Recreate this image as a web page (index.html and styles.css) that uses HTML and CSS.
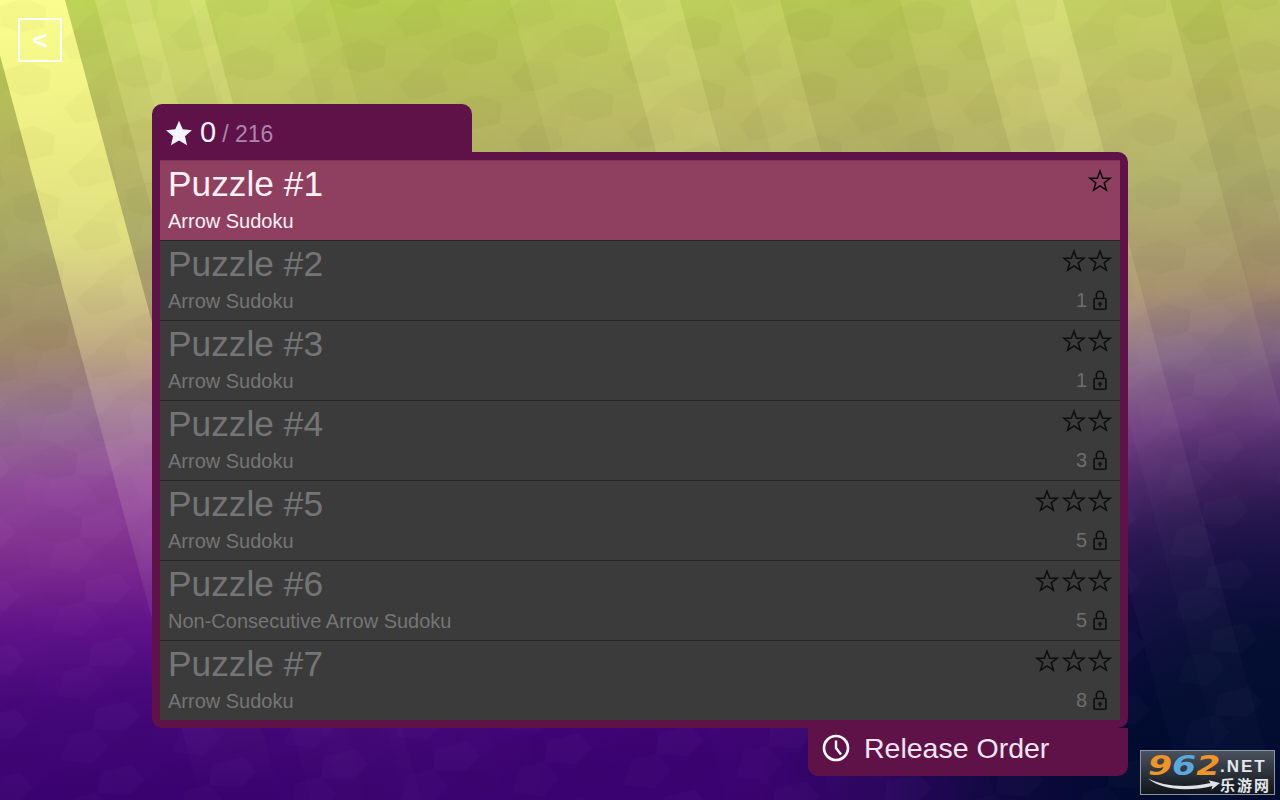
FILE: index.html
```html
<!DOCTYPE html>
<html lang="en">
<head>
    <meta charset="UTF-8">
    <title>Puzzle list</title>
    <link rel="stylesheet" href="styles.css">
</head>
<body>
<svg width="0" height="0" class="defs">
    <defs>
        <symbol id="star" viewBox="0 0 24 24"><path d="M12 2l2.6 7.2h7.7l-6.1 4.6 2.2 7.4L12 16.8l-6.4 4.4 2.2-7.4-6.1-4.6h7.7z" fill="none" stroke="currentColor" stroke-width="1.5"/></symbol>
        <symbol id="lock" viewBox="0 0 14 20"><path d="M3.4 8.5V4.8a3.6 3.6 0 0 1 7.2 0v3.7" fill="none" stroke="currentColor" stroke-width="1.5"/><rect x="1" y="8.5" width="12" height="10.7" rx="1.2" fill="none" stroke="currentColor" stroke-width="1.6"/><path d="M7 17v-4M5.2 14.6L7 12.6l1.8 2" fill="none" stroke="currentColor" stroke-width="1.4"/></symbol>
        <linearGradient id="fade" gradientUnits="userSpaceOnUse" x1="0" y1="0" x2="0" y2="800">
            <stop offset="0" stop-color="#ffffa0" stop-opacity="1"/>
            <stop offset=".3" stop-color="#ffffa0" stop-opacity=".5"/>
            <stop offset=".56" stop-color="#ffe0f0" stop-opacity=".18"/>
            <stop offset="1" stop-color="#ffe0ff" stop-opacity=".03"/>
        </linearGradient>
        <linearGradient id="fade-bright" gradientUnits="userSpaceOnUse" x1="0" y1="0" x2="0" y2="800">
            <stop offset="0" stop-color="#ffff90" stop-opacity=".95"/>
            <stop offset=".3" stop-color="#ffff90" stop-opacity=".62"/>
            <stop offset=".5" stop-color="#ffe0c0" stop-opacity=".2"/>
            <stop offset=".75" stop-color="#ffe0ff" stop-opacity=".07"/>
            <stop offset="1" stop-color="#ffe0ff" stop-opacity="0"/>
        </linearGradient>
        <pattern id="cells" patternUnits="userSpaceOnUse" width="112" height="64" patternTransform="rotate(-4)">
            <polygon points="0,6 24,0 46,10 42,30 18,34 0,26" fill="#000" fill-opacity=".05"/>
            <polygon points="46,10 78,4 90,20 74,34 42,30" fill="#fff" fill-opacity=".04"/>
            <polygon points="90,20 112,6 112,26 100,38 74,34" fill="#000" fill-opacity=".03"/>
            <polygon points="18,34 42,30 56,48 38,64 8,58" fill="#fff" fill-opacity=".03"/>
            <polygon points="56,48 74,34 100,38 104,58 78,64 66,64" fill="#000" fill-opacity=".05"/>
        </pattern>
    </defs>
</svg>
<div class="stage">
    <svg class="rays" viewBox="0 0 1280 800">
        <polygon class="a5" points="-15,0 65,0 281,800 201,800"/>
        <polygon class="a1" points="65,0 95,0 311,800 281,800"/>
        <polygon class="a3" points="95,0 125,0 341,800 311,800"/>
        <polygon class="a4" points="125,0 150,0 366,800 341,800"/>
        <polygon class="a3" points="150,0 190,0 406,800 366,800"/>
        <polygon class="a4" points="190,0 205,0 421,800 406,800"/>
        <polygon class="a2" points="205,0 290,0 506,800 421,800"/>
        <polygon class="a1" points="290,0 330,0 546,800 506,800"/>
        <polygon class="a1" points="510,0 560,0 776,800 726,800"/>
        <polygon class="a1" points="560,0 615,0 831,800 776,800"/>
        <polygon class="a3" points="615,0 680,0 896,800 831,800"/>
        <polygon class="a1" points="680,0 730,0 946,800 896,800"/>
        <polygon class="a2" points="730,0 780,0 996,800 946,800"/>
        <polygon class="a1" points="900,0 970,0 1186,800 1116,800"/>
        <polygon class="a3" points="970,0 1015,0 1231,800 1186,800"/>
        <polygon class="a4" points="1015,0 1063,0 1279,800 1231,800"/>
        <polygon class="a2" points="1063,0 1170,0 1386,800 1279,800"/>
        <polygon class="a1" points="1220,0 1280,0 1496,800 1436,800"/>
        <rect class="mesh" x="0" y="0" width="1280" height="800"/>
    </svg>

    <a class="back">&lt;</a>

    <div class="board">
        <div class="score">
            <svg class="score-star" viewBox="0 0 24 24"><path d="M12 1.5l3.2 7.3 7.9.8-6 5.2 1.8 7.7-6.9-4-6.9 4 1.8-7.7-6-5.2 7.9-.8z" fill="currentColor"/></svg>
            <span class="score-num">0</span>
            <span class="score-total">/ 216</span>
        </div>

        <div class="list">
            <div class="row current">
                <div class="row-top"><span class="name">Puzzle #1</span><span class="stars"><svg class="star"><use href="#star"/></svg></span></div>
                <div class="row-bottom"><span class="kind">Arrow Sudoku</span></div>
            </div>
            <div class="row">
                <div class="row-top"><span class="name">Puzzle #2</span><span class="stars"><svg class="star"><use href="#star"/></svg><svg class="star"><use href="#star"/></svg></span></div>
                <div class="row-bottom"><span class="kind">Arrow Sudoku</span><span class="need">1<svg class="lock"><use href="#lock"/></svg></span></div>
            </div>
            <div class="row">
                <div class="row-top"><span class="name">Puzzle #3</span><span class="stars"><svg class="star"><use href="#star"/></svg><svg class="star"><use href="#star"/></svg></span></div>
                <div class="row-bottom"><span class="kind">Arrow Sudoku</span><span class="need">1<svg class="lock"><use href="#lock"/></svg></span></div>
            </div>
            <div class="row">
                <div class="row-top"><span class="name">Puzzle #4</span><span class="stars"><svg class="star"><use href="#star"/></svg><svg class="star"><use href="#star"/></svg></span></div>
                <div class="row-bottom"><span class="kind">Arrow Sudoku</span><span class="need">3<svg class="lock"><use href="#lock"/></svg></span></div>
            </div>
            <div class="row">
                <div class="row-top"><span class="name">Puzzle #5</span><span class="stars"><svg class="star"><use href="#star"/></svg><svg class="star"><use href="#star"/></svg><svg class="star"><use href="#star"/></svg></span></div>
                <div class="row-bottom"><span class="kind">Arrow Sudoku</span><span class="need">5<svg class="lock"><use href="#lock"/></svg></span></div>
            </div>
            <div class="row">
                <div class="row-top"><span class="name">Puzzle #6</span><span class="stars"><svg class="star"><use href="#star"/></svg><svg class="star"><use href="#star"/></svg><svg class="star"><use href="#star"/></svg></span></div>
                <div class="row-bottom"><span class="kind">Non-Consecutive Arrow Sudoku</span><span class="need">5<svg class="lock"><use href="#lock"/></svg></span></div>
            </div>
            <div class="row">
                <div class="row-top"><span class="name">Puzzle #7</span><span class="stars"><svg class="star"><use href="#star"/></svg><svg class="star"><use href="#star"/></svg><svg class="star"><use href="#star"/></svg></span></div>
                <div class="row-bottom"><span class="kind">Arrow Sudoku</span><span class="need">8<svg class="lock"><use href="#lock"/></svg></span></div>
            </div>
        </div>

        <div class="order">
            <svg class="clock" viewBox="0 0 28 28"><circle cx="14" cy="14" r="12" fill="none" stroke="currentColor" stroke-width="2.6"/><path d="M14 6.5V14l5 6.5" fill="none" stroke="currentColor" stroke-width="2.4"/></svg>
            <span>Release Order</span>
        </div>
    </div>

    <div class="mark">
        <div class="mark-left">
            <span class="mark-num"><i class="o">9</i><i class="b">6</i><i class="o">2</i></span>
            <svg class="swoosh" viewBox="0 0 76 14"><path d="M0 1C14 9 40 12 66 6l-2-3 12 3-9 7 1-4C44 15 14 14 0 1z" fill="#dfe3e6"/></svg>
        </div>
        <div class="mark-side"><b>.NET</b><b class="cn">乐游网</b></div>
    </div>
</div>
</body>
</html>
```
FILE: styles.css
```css
* { box-sizing: border-box; }
body {
    margin: 0;
    font-family: "Liberation Sans", Arial, sans-serif;
}
.defs { display: block; height: 0; }
.stage {
    position: relative;
    width: 1280px;
    height: 800px;
    overflow: hidden;
    padding: 18px;
    background:
        radial-gradient(ellipse 520px 520px at 1280px 800px, #000a30 0%, #000a30 30%, rgba(0,10,48,.72) 55%, rgba(0,10,48,.3) 75%, rgba(0,10,48,0) 100%),
        linear-gradient(177deg, #b4cf4c 0, #b5b45e 150px, #a9a866 240px, #a08a68 347px, #957092 418px, #90489a 490px, #7f2d90 561px, #60128a 633px, #46087a 704px, #3a0270 800px);
}
.rays { position: absolute; left: 0; top: 0; width: 1280px; height: 800px; }
.rays polygon { fill: url(#fade); }
.rays .a1 { fill-opacity: .1; }
.rays .a2 { fill-opacity: .18; }
.rays .a3 { fill-opacity: .3; }
.rays .a4 { fill-opacity: .42; }
.rays .a5 { fill: url(#fade-bright); }
.mesh { fill: url(#cells); opacity: .4; }

.back {
    position: relative;
    display: flex;
    width: 44px;
    height: 44px;
    align-items: center;
    justify-content: center;
    padding-top: 1px;
    border: 2px solid #fff;
    border-radius: 2px;
    color: #fff;
    font-size: 26px;
    font-weight: bold;
}

.board {
    position: relative;
    width: 976px;
    margin: 42px 0 0 134px;
}
.score {
    display: flex;
    align-items: center;
    width: 320px;
    height: 48px;
    padding: 9px 13px 0;
    background: #5e1248;
    border-radius: 10px 10px 0 0;
    color: #f4f4ff;
}
.score-star { width: 28px; height: 28px; margin-right: 7px; }
.score-num { font-size: 29px; margin-right: 6px; }
.score-total { font-size: 23px; color: #ab86a8; margin-top: 3px; }

.list {
    padding: 8px;
    background: #5e1248;
    border-radius: 0 10px 10px 10px;
}
.row {
    height: 80px;
    padding: 0 8px;
    background: #3b3b3b;
    border-top: 1px solid #272727;
    color: #757575;
}
.current { background: #8f4060; color: #f8f0f4; border-top-color: #7d3554; }
.row-top, .row-bottom {
    display: flex;
    justify-content: space-between;
}
.row-top { height: 45px; padding-top: 2px; }
.row-bottom { height: 34px; padding-top: 2px; }
.name { font-size: 35.3px; line-height: 42px; }
.kind { font-size: 20px; line-height: 24px; margin-top: 1px; }
.stars { display: flex; gap: 2.5px; color: #0d0d0d; padding-top: 6px; }
.star { width: 24px; height: 24px; }
.need { display: flex; align-items: center; height: 24px; font-size: 20px; gap: 6px; margin-right: 5px; color: #6e6e6e; }
.lock { width: 14px; height: 20px; color: #0d0d0d; }

.order {
    display: flex;
    align-items: center;
    gap: 14px;
    width: 320px;
    height: 48px;
    margin-left: 656px;
    padding: 0 0 8px 14px;
    background: #5e1248;
    border-radius: 0 0 10px 10px;
    color: #f0e4f0;
    font-size: 28.5px;
}
.clock { width: 28px; height: 28px; color: #fff; }

.mark {
    position: absolute;
    left: 1140px;
    top: 750px;
    display: flex;
    width: 135px;
    height: 45px;
    padding: 3px 0 0 7px;
    border: 1px solid #8b95a5;
    background: linear-gradient(#4a525e, #2a3038 55%, #10141c);
}
.mark-left { display: flex; flex-direction: column; width: 72px; }
.mark-num {
    display: block;
    height: 23px;
    font-family: "DejaVu Sans", sans-serif;
    font-size: 26px;
    font-weight: bold;
    line-height: 25px;
    transform: scaleX(1.33);
    transform-origin: 0 0;
    white-space: nowrap;
}
.o { color: #ef9428; }
.b { color: #5ba8df; }
.swoosh { width: 72px; height: 14px; }
.mark-side { display: flex; flex-direction: column; align-items: flex-start; font-family: "Liberation Sans", "Noto Sans CJK SC", sans-serif; color: #e4e8ea; }
.mark-side b { font-size: 17px; line-height: 20px; letter-spacing: 2px; margin-top: 3px; }
.mark-side .cn { font-size: 15px; line-height: 18px; letter-spacing: 2px; margin-top: 0; }
```
